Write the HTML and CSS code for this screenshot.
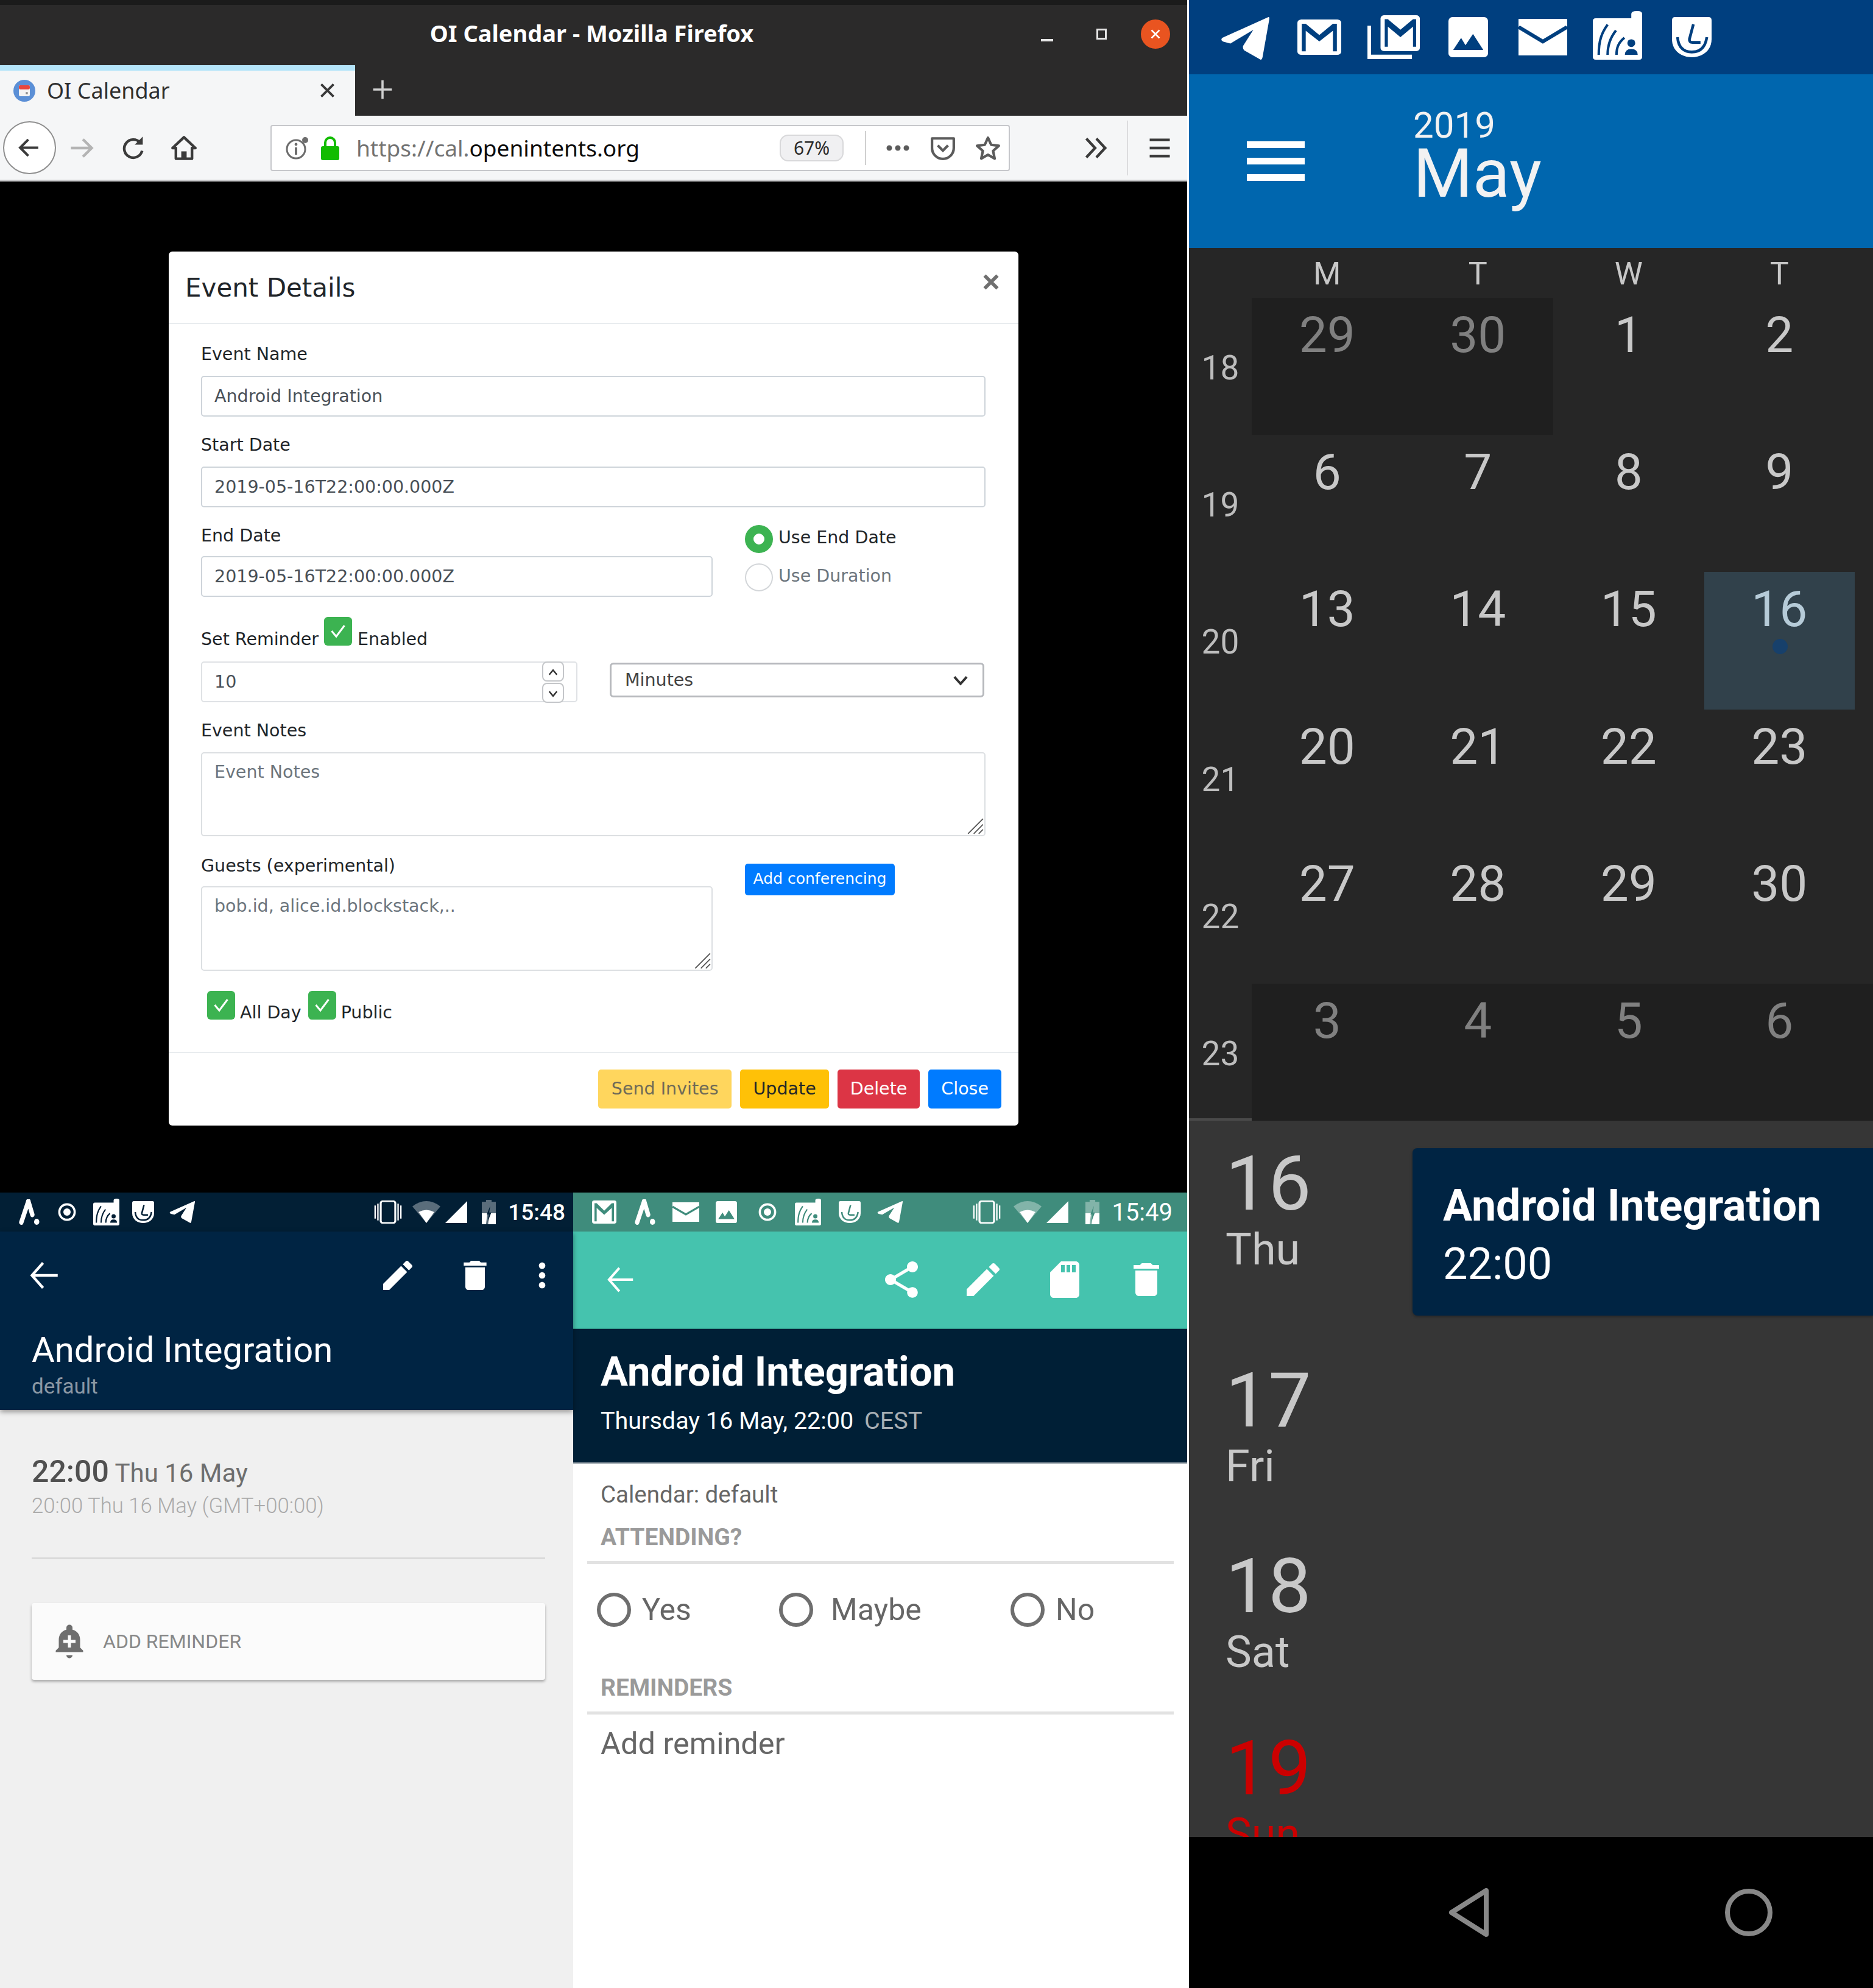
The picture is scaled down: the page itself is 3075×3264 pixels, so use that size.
FILE: index.html
```html
<!DOCTYPE html>
<html lang="en">
<head>
    <meta charset="UTF-8">
    <title>OI Calendar</title>
    <link rel="stylesheet" href="styles.css">
</head>
<body>
    <svg class="sprite" xmlns="http://www.w3.org/2000/svg">
        <symbol id="i-telegram" viewBox="0 0 100 100" preserveAspectRatio="none"><path d="M98 0 3 49Q-1 55 6 58L20 62 67 30 46 68Q45 74 48 78L82 100Q85 100 86 94L100 4Q100-1 98 0Z"/></symbol>
        <symbol id="i-gmail" viewBox="0 0 100 100" preserveAspectRatio="none"><rect width="100" height="100" rx="9"/><path d="M10 12V90H19V32L50 62 81 32V90H90V12H81L50 44 19 12Z" style="fill:var(--bg)"/></symbol>
        <symbol id="i-stack" viewBox="0 0 100 100" preserveAspectRatio="none"><path d="M0 24H7V90H85V100H0Z"/><rect x="25" width="75" height="82" rx="7"/><path d="M33 9V72H39V26L63 50 87 26V72H93V9H87L63 33 39 9Z" style="fill:var(--bg)"/></symbol>
        <symbol id="i-image" viewBox="0 0 100 100" preserveAspectRatio="none"><rect width="100" height="100" rx="10"/><path d="M12 82 32 52 43 70 62 42 88 82Z" style="fill:var(--bg)"/></symbol>
        <symbol id="i-mail" viewBox="0 0 100 100" preserveAspectRatio="none"><rect width="100" height="100"/><path d="M0 22 50 62 100 22" fill="none" stroke-width="9" style="stroke:var(--bg)"/></symbol>
        <symbol id="i-radio" viewBox="0 0 100 100" preserveAspectRatio="none"><path d="M6 15H78V6Q78 0 90 0 100 0 100 6V94Q100 100 94 100H6Q0 100 0 94V21Q0 15 6 15Z"/><g fill="none" stroke-width="5" style="stroke:var(--bg)"><path d="M12 90C12 60 18 45 30 28"/><path d="M30 90C30 70 35 55 47 40"/><path d="M48 90C48 75 52 65 64 55"/></g><g style="fill:var(--bg)"><circle cx="78" cy="66" r="8"/><path d="M65 90Q65 78 78 78 91 78 91 90Z"/></g></symbol>
        <symbol id="i-shield" viewBox="0 0 100 100" preserveAspectRatio="none"><path d="M0 8Q0 0 8 0H92Q100 0 100 8V55C100 85 75 100 50 100 25 100 0 85 0 55Z"/><g fill="none" stroke-width="7" style="stroke:var(--bg)"><path d="M54 18 44 55Q43 63 52 63H72"/><path d="M14 50C16 78 32 87 50 87 68 87 84 78 88 50"/></g></symbol>
        <symbol id="i-peak" viewBox="0 0 100 100" preserveAspectRatio="none"><path d="M46 8 14 90M46 8 64 60" fill="none" stroke="currentColor" stroke-width="20" stroke-linecap="round" stroke-linejoin="round"/><circle cx="84" cy="88" r="12"/></symbol>
        <symbol id="i-target" viewBox="0 0 100 100"><circle cx="50" cy="50" r="42" fill="none" stroke="currentColor" stroke-width="12"/><circle cx="50" cy="50" r="20"/></symbol>
        <symbol id="i-vibrate" viewBox="0 0 100 100" preserveAspectRatio="none"><rect x="24" y="3" width="52" height="94" rx="8" fill="none" stroke="currentColor" stroke-width="7"/><path d="M4 22V78M14 14V86M86 14V86M96 22V78" stroke="currentColor" stroke-width="5"/></symbol>
        <symbol id="i-wifi" viewBox="0 0 100 100" preserveAspectRatio="none"><path d="M0 24Q50-24 100 24L50 100Z" opacity=".35"/><path d="M22 50Q50 30 78 50L50 100Z"/></symbol>
        <symbol id="i-signal" viewBox="0 0 100 100" preserveAspectRatio="none"><path d="M100 0V100H0Z"/></symbol>
        <symbol id="i-battery" viewBox="0 0 100 100" preserveAspectRatio="none"><path d="M30 0H70V8H100V100H0V8H30Z" opacity=".35"/><path d="M0 55H40L30 100H0ZM55 55H100V100H45Z"/><path d="M60 25 35 60H50L42 90 68 52H53Z" style="fill:var(--bg)"/></symbol>
        <symbol id="i-back" viewBox="0 0 24 24"><path d="M21 12H3.500M11 3.500 3.500 12 11 20.500" fill="none" stroke="currentColor" stroke-width="1.800"/></symbol>
        <symbol id="i-pencil" viewBox="0 0 24 24"><path d="M3 17.25V21h3.75L17.81 9.94l-3.75-3.75L3 17.25zM20.71 7.04c.39-.39.39-1.02 0-1.41l-2.34-2.34c-.39-.39-1.02-.39-1.41 0l-1.83 1.83 3.75 3.75 1.83-1.83z"/></symbol>
        <symbol id="i-trash" viewBox="0 0 24 24"><path d="M6 19c0 1.1.9 2 2 2h8c1.1 0 2-.9 2-2V7H6v12zM19 4h-3.5l-1-1h-5l-1 1H5v2h14V4z"/></symbol>
        <symbol id="i-dots" viewBox="0 0 24 24"><path d="M12 8c1.1 0 2-.9 2-2s-.9-2-2-2-2 .9-2 2 .9 2 2 2zm0 2c-1.1 0-2 .9-2 2s.9 2 2 2 2-.9 2-2-.9-2-2-2zm0 6c-1.1 0-2 .9-2 2s.9 2 2 2 2-.9 2-2-.9-2-2-2z"/></symbol>
        <symbol id="i-share" viewBox="0 0 24 24"><path d="M18 16.08c-.76 0-1.44.3-1.96.77L8.91 12.7c.05-.23.09-.46.09-.7s-.04-.47-.09-.7l7.05-4.11c.54.5 1.25.81 2.04.81 1.66 0 3-1.34 3-3s-1.34-3-3-3-3 1.34-3 3c0 .24.04.47.09.7L8.04 9.81C7.5 9.31 6.79 9 6 9c-1.66 0-3 1.34-3 3s1.34 3 3 3c.79 0 1.5-.31 2.04-.81l7.12 4.16c-.05.21-.08.43-.08.65 0 1.61 1.31 2.92 2.92 2.92s2.92-1.31 2.92-2.92-1.31-2.92-2.92-2.92z"/></symbol>
        <symbol id="i-sd" viewBox="0 0 24 24"><path d="M18 2h-8L4.02 8 4 20c0 1.1.9 2 2 2h12c1.1 0 2-.9 2-2V4c0-1.1-.9-2-2-2zm-6 6h-2V4h2v4zm3 0h-2V4h2v4zm3 0h-2V4h2v4z"/></symbol>
        <symbol id="i-bell" viewBox="0 0 24 24"><path fill-rule="evenodd" d="M12 23c1.1 0 2-.9 2-2h-4c0 1.1.9 2 2 2zM19 16v-5c0-3.5-2-6-5-6.7V3a2 2 0 0 0-4 0v1.3C7 5 5 7.5 5 11v5l-2 2v1h18v-1l-2-2zM16 13h-3v3h-2v-3H8v-2h3V8h2v3h3v2z"/></symbol>
    </svg>

    <div class="screen">
        <div class="left-col">
            <div class="browser">
                <div class="titlebar">
                    <div class="window-title">OI Calendar - Mozilla Firefox</div>
                    <div class="window-btns">
                        <span class="win-min"></span>
                        <span class="win-max"></span>
                        <span class="win-close">
                            <svg viewBox="0 0 24 24"><path d="M6 6 18 18M18 6 6 18" stroke="#fff" stroke-width="2.4"/></svg>
                        </span>
                    </div>
                </div>
                <div class="tabbar">
                    <div class="tab">
                        <svg class="favicon" viewBox="0 0 32 32">
                            <circle cx="16" cy="16" r="16" fill="#5b8fd6"/>
                            <rect x="8" y="8" width="16" height="16" rx="2" fill="#f3f3f3"/>
                            <rect x="8" y="8" width="16" height="6" rx="2" fill="#e8463c"/>
                            <rect x="18" y="18" width="3" height="3" fill="#8a8a8a"/>
                        </svg>
                        <span class="tab-label">OI Calendar</span>
                        <svg class="tab-x" viewBox="0 0 24 24"><path d="M3 3 21 21M21 3 3 21" stroke="#3b3b3b" stroke-width="3.4"/></svg>
                    </div>
                    <svg class="tab-plus" viewBox="0 0 40 40"><path d="M20 3V37M3 20H37" stroke="#cfcfcf" stroke-width="4"/></svg>
                </div>
                <div class="toolbar">
                    <div class="nav-back">
                        <svg viewBox="0 0 40 40"><path d="M34 20H6M18 7 5 20 18 33" fill="none" stroke="#3b3b3b" stroke-width="4"/></svg>
                    </div>
                    <svg class="nav-icon nav-fwd" viewBox="0 0 40 40"><path d="M4 20H34M22 7 35 20 22 33" fill="none" stroke="#b4b4b4" stroke-width="4"/></svg>
                    <svg class="nav-icon nav-reload" viewBox="0 0 40 40"><path d="M30 12A13.500 13.500 0 1 0 33 24" fill="none" stroke="#3b3b3b" stroke-width="4"/><path d="M34 3V15H22Z" fill="#3b3b3b"/></svg>
                    <svg class="nav-icon nav-home" viewBox="0 0 40 40"><path d="M3 20 20 4 37 20H32V36H8V20Z" fill="none" stroke="#3b3b3b" stroke-width="4" stroke-linejoin="round"/><rect x="16" y="25" width="8" height="11" fill="#3b3b3b"/></svg>
                    <div class="urlbar">
                        <svg class="url-info" viewBox="0 0 40 40"><circle cx="18" cy="22" r="15" fill="none" stroke="#6d6d6d" stroke-width="3"/><circle cx="33" cy="7" r="5" fill="#6d6d6d"/><circle cx="18" cy="14" r="2.4" fill="#6d6d6d"/><rect x="16" y="19" width="4" height="12" fill="#6d6d6d"/></svg>
                        <svg class="url-lock" viewBox="0 0 32 40"><path d="M8 18V11a8 8 0 0 1 16 0v7" fill="none" stroke="#12bc00" stroke-width="4"/><rect x="1" y="17" width="30" height="23" rx="3" fill="#12bc00"/></svg>
                        <div class="url-text"><span class="url-dim">https://cal.</span>openintents.org</div>
                        <div class="url-zoom">67%</div>
                        <div class="url-sep"></div>
                        <svg class="url-more" viewBox="0 0 40 12"><circle cx="6" cy="6" r="4.500"/><circle cx="20" cy="6" r="4.500"/><circle cx="34" cy="6" r="4.500"/></svg>
                        <svg class="url-pocket" viewBox="0 0 40 40"><path d="M3 5H37V20A17 17 0 0 1 3 20Z" fill="none" stroke="#5b5b5b" stroke-width="4" stroke-linejoin="round"/><path d="M12 16 20 24 28 16" fill="none" stroke="#5b5b5b" stroke-width="4"/></svg>
                        <svg class="url-star" viewBox="0 0 40 40"><path d="M20 4 25 15 37 16.500 28 24.500 30.500 36.500 20 30.500 9.500 36.500 12 24.500 3 16.500 15 15Z" fill="none" stroke="#5b5b5b" stroke-width="4" stroke-linejoin="round"/></svg>
                    </div>
                    <svg class="nav-icon nav-overflow" viewBox="0 0 40 40"><path d="M5 6 18 20 5 34M20 6 33 20 20 34" fill="none" stroke="#3b3b3b" stroke-width="4"/></svg>
                    <div class="toolbar-sep"></div>
                    <svg class="nav-icon nav-menu" viewBox="0 0 40 40"><path d="M5 8H35M5 20H35M5 32H35" stroke="#3b3b3b" stroke-width="4"/></svg>
                </div>
                <div class="page-area">
                    <div class="modal">
                        <div class="modal-header">
                            <div class="modal-title">Event Details</div>
                            <svg class="modal-x" viewBox="0 0 24 24"><path d="M3 3 21 21M21 3 3 21" stroke="#6f6f6f" stroke-width="5"/></svg>
                        </div>
                        <div class="modal-body">
                            <div class="field">
                                <div class="label">Event Name</div>
                                <div class="input">Android Integration</div>
                            </div>
                            <div class="field">
                                <div class="label">Start Date</div>
                                <div class="input">2019-05-16T22:00:00.000Z</div>
                            </div>
                            <div class="split">
                                <div class="field col-main">
                                    <div class="label">End Date</div>
                                    <div class="input">2019-05-16T22:00:00.000Z</div>
                                </div>
                                <div class="col-side radio-col">
                                    <div class="radio-row">
                                        <span class="radio radio-on"></span><span class="radio-text">Use End Date</span>
                                    </div>
                                    <div class="radio-row radio-row-off">
                                        <span class="radio"></span><span class="radio-text">Use Duration</span>
                                    </div>
                                </div>
                            </div>
                            <div class="reminder-label">
                                <span class="reminder-text">Set Reminder</span>
                                <span class="check"><svg viewBox="0 0 24 24"><path d="M5 12 10 18 19 6" fill="none" stroke="#fff" stroke-width="2"/></svg></span>
                                <span class="reminder-text">Enabled</span>
                            </div>
                            <div class="reminder-row">
                                <div class="input input-number">
                                    <span>10</span>
                                    <div class="spinner">
                                        <span class="spin-btn"><svg viewBox="0 0 16 16"><path d="M3 11 8 5 13 11" fill="none" stroke="#333" stroke-width="2"/></svg></span>
                                        <span class="spin-btn"><svg viewBox="0 0 16 16"><path d="M3 5 8 11 13 5" fill="none" stroke="#333" stroke-width="2"/></svg></span>
                                    </div>
                                </div>
                                <div class="select">
                                    <span>Minutes</span>
                                    <svg viewBox="0 0 24 16"><path d="M3 3 12 13 21 3" fill="none" stroke="#333" stroke-width="3.4"/></svg>
                                </div>
                            </div>
                            <div class="field field-notes">
                                <div class="label">Event Notes</div>
                                <div class="textarea placeholder">Event Notes
                                    <svg class="grip" viewBox="0 0 24 24"><path d="M23 2 2 23M23 10 10 23M23 17 17 23" stroke="#555" stroke-width="1.600"/></svg>
                                </div>
                            </div>
                            <div class="split">
                                <div class="field col-main">
                                    <div class="label">Guests (experimental)</div>
                                    <div class="textarea placeholder">bob.id, alice.id.blockstack,..
                                        <svg class="grip" viewBox="0 0 24 24"><path d="M23 2 2 23M23 10 10 23M23 17 17 23" stroke="#555" stroke-width="1.600"/></svg>
                                    </div>
                                </div>
                                <div class="col-side">
                                    <div class="btn btn-blue btn-small">Add conferencing</div>
                                </div>
                            </div>
                            <div class="checks-row">
                                <span class="check"><svg viewBox="0 0 24 24"><path d="M5 12 10 18 19 6" fill="none" stroke="#fff" stroke-width="2"/></svg></span>
                                <span class="check-text">All Day</span>
                                <span class="check"><svg viewBox="0 0 24 24"><path d="M5 12 10 18 19 6" fill="none" stroke="#fff" stroke-width="2"/></svg></span>
                                <span class="check-text">Public</span>
                            </div>
                        </div>
                        <div class="modal-footer">
                            <div class="btn btn-yellow-off">Send Invites</div>
                            <div class="btn btn-yellow">Update</div>
                            <div class="btn btn-red">Delete</div>
                            <div class="btn btn-blue">Close</div>
                        </div>
                    </div>
                </div>
            </div>

            <div class="phones">
                <div class="phone phone-a">
                    <div class="status status-navy">
                        <svg class="st st-peak"><use href="#i-peak"/></svg>
                        <svg class="st st-target"><use href="#i-target"/></svg>
                        <svg class="st st-radio"><use href="#i-radio"/></svg>
                        <svg class="st st-shield"><use href="#i-shield"/></svg>
                        <svg class="st st-plane"><use href="#i-telegram"/></svg>
                        <div class="status-right">
                            <svg class="st st-vibrate"><use href="#i-vibrate"/></svg>
                            <svg class="st st-wifi"><use href="#i-wifi"/></svg>
                            <svg class="st st-signal"><use href="#i-signal"/></svg>
                            <svg class="st st-battery"><use href="#i-battery"/></svg>
                            <span class="clock">15:48</span>
                        </div>
                    </div>
                    <div class="appbar-a">
                        <div class="actions-a">
                            <svg class="act-back"><use href="#i-back"/></svg>
                            <svg class="act act-push"><use href="#i-pencil"/></svg>
                            <svg class="act act-trash-a"><use href="#i-trash"/></svg>
                            <svg class="act act-dots-a"><use href="#i-dots"/></svg>
                        </div>
                        <div class="a-title">Android Integration</div>
                        <div class="a-sub">default</div>
                    </div>
                    <div class="a-body">
                        <div class="a-time"><strong>22:00</strong> Thu 16 May</div>
                        <div class="a-time-sub">20:00 Thu 16 May (GMT+00:00)</div>
                        <div class="a-divider"></div>
                        <div class="a-card">
                            <svg class="a-bell"><use href="#i-bell"/></svg>
                            <span>ADD REMINDER</span>
                        </div>
                    </div>
                </div>

                <div class="phone phone-b">
                    <div class="status status-teal">
                        <svg class="st st-gmail"><use href="#i-gmail"/></svg>
                        <svg class="st st-peak"><use href="#i-peak"/></svg>
                        <svg class="st st-mail"><use href="#i-mail"/></svg>
                        <svg class="st st-image"><use href="#i-image"/></svg>
                        <svg class="st st-target"><use href="#i-target"/></svg>
                        <svg class="st st-radio"><use href="#i-radio"/></svg>
                        <svg class="st st-shield"><use href="#i-shield"/></svg>
                        <svg class="st st-plane"><use href="#i-telegram"/></svg>
                        <div class="status-right">
                            <svg class="st st-vibrate"><use href="#i-vibrate"/></svg>
                            <svg class="st st-wifi"><use href="#i-wifi"/></svg>
                            <svg class="st st-signal"><use href="#i-signal"/></svg>
                            <svg class="st st-battery"><use href="#i-battery"/></svg>
                            <span class="clock">15:49</span>
                        </div>
                    </div>
                    <div class="appbar-b">
                        <svg class="act-back act-back-b"><use href="#i-back"/></svg>
                        <svg class="act-b act-push"><use href="#i-share"/></svg>
                        <svg class="act-b"><use href="#i-pencil"/></svg>
                        <svg class="act-b"><use href="#i-sd"/></svg>
                        <svg class="act-b"><use href="#i-trash"/></svg>
                    </div>
                    <div class="b-header">
                        <div class="b-title">Android Integration</div>
                        <div class="b-when">Thursday 16 May, 22:00 <span class="b-zone">CEST</span></div>
                    </div>
                    <div class="b-body">
                        <div class="b-calendar">Calendar: default</div>
                        <div class="b-section">ATTENDING?</div>
                        <div class="b-rule"></div>
                        <div class="b-radios">
                            <span class="b-radio-wrap b-yes"><span class="b-radio"></span>Yes</span>
                            <span class="b-radio-wrap b-maybe"><span class="b-radio"></span>Maybe</span>
                            <span class="b-radio-wrap"><span class="b-radio"></span>No</span>
                        </div>
                        <div class="b-section b-section-2">REMINDERS</div>
                        <div class="b-rule"></div>
                        <div class="b-add">Add reminder</div>
                    </div>
                </div>
            </div>
        </div>

        <div class="right-col">
            <div class="status status-blue">
                <svg class="st-r r-plane"><use href="#i-telegram"/></svg>
                <svg class="st-r r-gmail"><use href="#i-gmail"/></svg>
                <svg class="st-r r-stack"><use href="#i-stack"/></svg>
                <svg class="st-r r-image"><use href="#i-image"/></svg>
                <svg class="st-r r-mail"><use href="#i-mail"/></svg>
                <svg class="st-r r-radio"><use href="#i-radio"/></svg>
                <svg class="st-r r-shield"><use href="#i-shield"/></svg>
            </div>
            <div class="cal-header">
                <div class="hamburger"><span></span><span></span><span></span></div>
                <div class="cal-heading">
                    <div class="cal-year">2019</div>
                    <div class="cal-month">May</div>
                </div>
            </div>
            <div class="cal-grid">
                <div></div>
                <div class="weekday">M</div>
                <div class="weekday">T</div>
                <div class="weekday">W</div>
                <div class="weekday">T</div>
                <div></div>

                <div class="week-no">18</div>
                <div class="day day-off">29</div>
                <div class="day day-off">30</div>
                <div class="day">1</div>
                <div class="day">2</div>
                <div></div>

                <div class="week-no">19</div>
                <div class="day">6</div>
                <div class="day">7</div>
                <div class="day">8</div>
                <div class="day">9</div>
                <div></div>

                <div class="week-no">20</div>
                <div class="day">13</div>
                <div class="day">14</div>
                <div class="day">15</div>
                <div class="day day-today">16<span class="day-dot"></span></div>
                <div></div>

                <div class="week-no">21</div>
                <div class="day">20</div>
                <div class="day">21</div>
                <div class="day">22</div>
                <div class="day">23</div>
                <div></div>

                <div class="week-no">22</div>
                <div class="day">27</div>
                <div class="day">28</div>
                <div class="day">29</div>
                <div class="day">30</div>
                <div></div>

                <div class="week-no">23</div>
                <div class="day day-off">3</div>
                <div class="day day-off">4</div>
                <div class="day day-off">5</div>
                <div class="day day-off">6</div>
                <div class="day-off"></div>
            </div>
            <div class="agenda">
                <div class="agenda-row row-16">
                    <div class="agenda-date">
                        <div class="agenda-num">16</div>
                        <div class="agenda-dow">Thu</div>
                    </div>
                    <div class="event-card">
                        <div class="event-title">Android Integration</div>
                        <div class="event-time">22:00</div>
                    </div>
                </div>
                <div class="agenda-row row-17">
                    <div class="agenda-date">
                        <div class="agenda-num">17</div>
                        <div class="agenda-dow">Fri</div>
                    </div>
                </div>
                <div class="agenda-row row-18">
                    <div class="agenda-date">
                        <div class="agenda-num">18</div>
                        <div class="agenda-dow">Sat</div>
                    </div>
                </div>
                <div class="agenda-row agenda-sunday">
                    <div class="agenda-date">
                        <div class="agenda-num">19</div>
                        <div class="agenda-dow">Sun</div>
                    </div>
                </div>
            </div>
            <div class="navbar">
                <svg class="nav-tri" viewBox="0 0 68 80"><path d="M62 4V76L5 40Z" fill="none" stroke="#888" stroke-width="8" stroke-linejoin="round"/></svg>
                <svg class="nav-circle" viewBox="0 0 80 80"><circle cx="40" cy="40" r="35" fill="none" stroke="#888" stroke-width="8"/></svg>
            </div>
        </div>
    </div>
</body>
</html>
```

FILE: styles.css
```css
* {
    box-sizing: border-box;
}
html, body {
    margin: 0;
    background: #000;
}
body {
    width: 3075px;
    height: 3264px;
    overflow: hidden;
    font-family: 'Roboto', 'Liberation Sans', sans-serif;
}
svg {
    display: block;
    fill: currentColor;
}
.sprite {
    width: 0;
    height: 0;
    position: absolute;
}
.screen {
    display: flex;
    width: 3075px;
    height: 3264px;
}
.left-col {
    width: 1952px;
    flex: none;
    background: #fff;
}
.right-col {
    width: 1123px;
    flex: none;
    display: flex;
    flex-direction: column;
}

/* Firefox window */
.browser {
    width: 1949px;
    height: 1958px;
    display: flex;
    flex-direction: column;
    font-family: 'Noto Sans', 'Open Sans', sans-serif;
}
.titlebar {
    height: 107px;
    background: #2b2a2a;
    border-top: 8px solid #1b1b1b;
    display: flex;
    align-items: center;
    justify-content: center;
    position: relative;
    color: #fff;
}
.window-title {
    font-size: 38px;
    font-weight: 700;
    margin-top: -8px;
    margin-right: 6px;
}
.window-btns span {
    position: absolute;
}
.win-min {
    left: 1709px;
    top: 56px;
    width: 20px;
    height: 4px;
    background: #e6e6e6;
}
.win-max {
    left: 1800px;
    top: 39px;
    width: 17px;
    height: 18px;
    border: 3px solid #e6e6e6;
}
.win-close {
    left: 1873px;
    top: 24px;
    width: 48px;
    height: 48px;
    border-radius: 50%;
    background: #e95420;
    padding: 11px;
}
.tabbar {
    height: 83px;
    background: #2b2a2a;
    display: flex;
    align-items: center;
}
.tab {
    width: 583px;
    height: 83px;
    background: #f5f6f7;
    border-top: 9px solid #b4e4f9;
    display: flex;
    align-items: center;
    padding-left: 22px;
    padding-bottom: 9px;
    margin-right: 27px;
}
.favicon {
    width: 36px;
    height: 36px;
}
.tab-label {
    font-size: 36px;
    color: #2f2f2f;
    margin-left: 19px;
}
.tab-x {
    width: 27px;
    height: 27px;
    margin-left: auto;
    margin-right: 32px;
}
.tab-plus {
    width: 36px;
    height: 36px;
    margin-top: -4px;
}
.toolbar {
    height: 108px;
    background: #f5f6f7;
    border-bottom: 3px solid #c9c9cb;
    display: flex;
    align-items: center;
    padding-left: 5px;
}
.nav-back {
    width: 87px;
    height: 87px;
    border-radius: 50%;
    background: #fff;
    border: 2px solid #8f8f8f;
    padding: 21px;
}
.nav-icon {
    width: 44px;
    height: 44px;
    flex: none;
}
.nav-fwd {
    margin-left: 20px;
}
.nav-reload {
    margin-left: 41px;
}
.nav-home {
    margin-left: 39px;
}
.urlbar {
    width: 1214px;
    height: 76px;
    margin-left: 120px;
    background: #fff;
    border: 2px solid #c6c7cb;
    border-radius: 4px;
    display: flex;
    align-items: center;
    flex: none;
}
.url-info {
    width: 40px;
    height: 40px;
    margin-left: 22px;
}
.url-lock {
    width: 32px;
    height: 40px;
    margin-left: 18px;
}
.url-text {
    font-size: 37px;
    color: #0c0c0d;
    margin-left: 27px;
    white-space: nowrap;
    width: 695px;
}
.url-dim {
    color: #737373;
}
.url-zoom {
    width: 105px;
    height: 44px;
    line-height: 40px;
    text-align: center;
    font-size: 30px;
    background: #f0f0f2;
    border: 2px solid #d8d8da;
    border-radius: 14px;
    color: #2b2b2b;
}
.url-sep {
    width: 2px;
    height: 56px;
    background: #d0d0d0;
    margin-left: 35px;
}
.url-more {
    width: 40px;
    height: 12px;
    margin-left: 32px;
    color: #5b5b5b;
}
.url-pocket {
    width: 42px;
    height: 42px;
    margin-left: 33px;
}
.url-star {
    width: 42px;
    height: 42px;
    margin-left: 32px;
}
.nav-overflow {
    margin-left: 120px;
}
.toolbar-sep {
    width: 2px;
    height: 90px;
    background: #dcdcde;
    margin-left: 28px;
}
.nav-menu {
    margin-left: 30px;
}

/* event modal */
.page-area {
    flex: 1;
    background: #000;
    padding: 115px 0 0 277px;
}
.modal {
    width: 1395px;
    height: 1435px;
    background: #fff;
    border-radius: 6px;
    font-family: 'DejaVu Sans', sans-serif;
    color: #212529;
    font-size: 28.5px;
    display: flex;
    flex-direction: column;
}
.modal-header {
    height: 119px;
    flex: none;
    border-bottom: 2px solid #e9ecef;
    padding: 0 31px 0 27px;
    display: flex;
    justify-content: space-between;
}
.modal-title {
    font-size: 42px;
    line-height: 119px;
}
.modal-x {
    width: 28px;
    height: 28px;
    margin-top: 36px;
}
.modal-body {
    flex: 1;
    padding: 33px 54px 0 53px;
}
.field {
    margin-bottom: 30px;
}
.label {
    height: 34px;
    line-height: 34px;
    margin-bottom: 18px;
}
.input {
    height: 67px;
    line-height: 63px;
    border: 2px solid #ced4da;
    border-radius: 5px;
    padding: 0 20px;
    color: #495057;
    background: #fff;
}
.split {
    display: flex;
}
.col-main {
    width: 840px;
    flex: none;
    margin-bottom: 0;
}
.col-main .label {
    margin-bottom: 16px;
}
.col-side {
    margin-left: 53px;
}
.radio-col {
    padding-top: 0;
    margin-top: -3px;
}
.radio-row {
    display: flex;
    align-items: center;
    height: 46px;
    gap: 9px;
    margin-top: 2px;
}
.radio-row-off {
    margin-top: 17px;
    color: #6c757d;
}
.radio-text {
    padding-bottom: 6px;
}
.radio {
    width: 46px;
    height: 46px;
    border-radius: 50%;
    border: 2px solid #d3d6d9;
    background: #fff;
    flex: none;
    display: block;
}
.radio-on {
    border: 14px solid #3cb351;
}
.reminder-label {
    display: flex;
    align-items: flex-end;
    height: 48px;
    margin-top: 32px;
    line-height: 36px;
}
.reminder-text {
    position: relative;
    top: 8px;
    margin-right: 9px;
}
.check {
    width: 46px;
    height: 47px;
    background: #3cb351;
    border-radius: 6px;
    flex: none;
    display: block;
    padding: 5px;
}
.reminder-label .check {
    margin-right: 9px;
}
.reminder-row {
    display: flex;
    margin-top: 26px;
    align-items: flex-start;
}
.input-number {
    width: 618px;
    position: relative;
    border-color: #dfe2e5;
}
.spinner {
    position: absolute;
    right: 20px;
    top: -2px;
    display: flex;
    flex-direction: column;
    gap: 2px;
}
.spin-btn {
    width: 36px;
    height: 33px;
    border: 2px solid #c4c6c9;
    border-radius: 8px;
    background: #fff;
    padding: 6px;
    display: block;
}
.select {
    width: 615px;
    height: 57px;
    margin-left: 53px;
    margin-top: 2px;
    border: 3px solid #b7b9bd;
    border-radius: 6px;
    display: flex;
    align-items: center;
    justify-content: space-between;
    padding: 0 22px 0 22px;
    color: #444;
}
.select svg {
    width: 28px;
    height: 18px;
}
.field-notes {
    margin-top: 30px;
    margin-bottom: 32px;
}
.field-notes .label {
    margin-bottom: 18px;
}
.textarea {
    height: 138px;
    border: 2px solid #dcdfe2;
    border-radius: 5px;
    padding: 14px 20px;
    position: relative;
    line-height: 34px;
}
.placeholder {
    color: #6c757d;
}
.grip {
    position: absolute;
    right: 1px;
    bottom: 1px;
    width: 28px;
    height: 28px;
}
.col-main .textarea {
    height: 139px;
}
.btn {
    height: 64px;
    line-height: 64px;
    padding: 0 21px;
    border-radius: 5px;
    color: #fff;
    white-space: nowrap;
}
.btn-small {
    width: 246px;
    height: 52px;
    line-height: 50px;
    padding: 0;
    text-align: center;
    font-size: 25px;
    margin-top: 13px;
}
.btn-blue {
    background: #007bff;
}
.btn-red {
    background: #dc3545;
}
.btn-yellow {
    background: #ffc107;
    color: #212529;
}
.btn-yellow-off {
    background: #ffd65d;
    color: #6e6a57;
    padding: 0 22px;
}
.checks-row {
    display: flex;
    align-items: flex-end;
    margin-top: 32px;
    padding-left: 10px;
    height: 48px;
    line-height: 34px;
}
.check-text {
    margin: 0 11px 0 8px;
    position: relative;
    top: 6px;
}
.modal-footer {
    height: 121px;
    flex: none;
    border-top: 2px solid #e9ecef;
    display: flex;
    justify-content: flex-end;
    gap: 14px;
    padding: 27px 28px 0 0;
}

/* android screenshots */
.phones {
    display: flex;
    height: 1306px;
}
.phone {
    display: flex;
    flex-direction: column;
}
.phone-a {
    width: 941px;
    background: #f0f0f0;
    flex: none;
}
.phone-b {
    width: 1011px;
    background: #fff;
    flex: none;
}
.status {
    height: 64px;
    flex: none;
    display: flex;
    align-items: center;
    color: #fff;
    position: relative;
}
.status-navy {
    --bg: #021f35;
    background: #021f35;
    padding-left: 30px;
    height: 64px;
}
.status-teal {
    --bg: #3f8c7c;
    background: #3f8c7c;
    padding-left: 31px;
    margin-right: 3px;
}
.status-right {
    margin-left: auto;
    display: flex;
    align-items: center;
}
.phone-a .status-right {
    margin-right: 13px;
}
.phone-b .status-right {
    margin-right: 24px;
}
.st {
    flex: none;
}
.st-gmail {
    width: 40px;
    height: 38px;
    margin-right: 29px;
}
.st-peak {
    width: 36px;
    height: 42px;
}
.st-mail {
    width: 44px;
    height: 32px;
    margin-left: 27px;
}
.st-image {
    width: 35px;
    height: 36px;
    margin-left: 27px;
}
.st-target {
    width: 30px;
    height: 30px;
    margin-left: 29px;
}
.phone-b .st-target {
    margin-left: 35px;
}
.st-radio {
    width: 43px;
    height: 44px;
    margin-left: 28px;
}
.phone-b .st-radio {
    margin-left: 30px;
}
.st-shield {
    width: 36px;
    height: 36px;
    margin-left: 21px;
}
.phone-b .st-shield {
    margin-left: 29px;
}
.st-plane {
    width: 42px;
    height: 36px;
    margin-left: 25px;
}
.phone-b .st-plane {
    margin-left: 27px;
}
.st-vibrate {
    width: 46px;
    height: 38px;
}
.st-wifi {
    width: 46px;
    height: 36px;
    margin-left: 17px;
}
.phone-b .st-wifi {
    margin-left: 21px;
}
.st-signal {
    width: 36px;
    height: 36px;
    margin-left: 8px;
}
.st-battery {
    width: 23px;
    height: 40px;
    margin-left: 24px;
}
.phone-b .st-battery {
    margin-left: 28px;
}
.clock {
    font-size: 37px;
    font-weight: 500;
    margin-left: 20px;
}
.phone-b .clock {
    font-weight: 400;
    font-size: 40px;
}
.appbar-a {
    height: 293px;
    background: #002443;
    color: #fff;
    flex: none;
    box-shadow: 0 3px 8px rgba(0,0,0,0.4);
    padding: 0 19px 0 52px;
    position: relative;
}
.actions-a {
    display: flex;
    align-items: center;
    height: 64px;
    margin-top: 40px;
}
.act-back {
    width: 58px;
    height: 58px;
    margin-left: -8px;
}
.act {
    width: 64px;
    height: 64px;
}
.act-push {
    margin-left: auto;
}
.act-trash-a {
    margin-left: 63px;
}
.act-dots-a {
    margin-left: 46px;
}
.a-title {
    font-size: 58px;
    line-height: 70px;
    margin-top: 55px;
}
.a-sub {
    font-size: 35px;
    line-height: 44px;
    margin-top: 4px;
    color: #8a97a3;
}
.a-body {
    padding: 0 46px 0 52px;
    flex: 1;
}
.a-time {
    font-size: 42px;
    color: #6e6e6e;
    margin-top: 72px;
    line-height: 58px;
}
.a-time strong {
    font-size: 50px;
    color: #505050;
    font-weight: 500;
}
.a-time-sub {
    font-size: 34.7px;
    color: #aaa;
    margin-top: 2px;
    font-weight: 300;
    line-height: 44px;
}
.a-divider {
    height: 3px;
    background: #dadada;
    margin-top: 63px;
}
.a-card {
    height: 126px;
    margin-top: 72px;
    background: #fbfbfb;
    border-radius: 4px;
    box-shadow: 0 3px 4px rgba(0,0,0,0.3);
    display: flex;
    align-items: center;
    padding-left: 32px;
    color: #888;
    font-size: 32px;
}
.a-bell {
    width: 60px;
    height: 60px;
    color: #6e6e6e;
    margin-right: 25px;
}
.appbar-b {
    height: 160px;
    flex: none;
    background: #45c3ae;
    border-bottom: 2px solid #35a090;
    color: #fff;
    display: flex;
    align-items: center;
    padding: 0 31px 0 51px;
    margin-right: 3px;
}
.act-back-b {
    width: 54px;
    height: 54px;
    margin-left: 0;
}
.act-b {
    width: 72px;
    height: 72px;
    flex: none;
}
.act-b + .act-b {
    margin-left: 62px;
}
.b-header {
    height: 221px;
    flex: none;
    background: #001f36;
    border-bottom: 2px solid #85919b;
    color: #fff;
    padding: 32px 0 0 45px;
    margin-right: 3px;
}
.b-title {
    font-size: 67px;
    font-weight: 700;
    line-height: 76px;
}
.b-when {
    font-size: 39.5px;
    margin-top: 18px;
    line-height: 50px;
}
.b-zone {
    color: #a8afb5;
    margin-left: 8px;
}
.b-body {
    padding: 0 25px 0 23px;
    color: #666;
}
.b-calendar {
    font-size: 38.5px;
    margin: 26px 22px 0;
    line-height: 50px;
}
.b-section {
    font-size: 39px;
    font-weight: 700;
    color: #9a9a9a;
    margin: 20px 22px 0;
    line-height: 50px;
}
.b-section-2 {
    margin-top: 0;
}
.b-rule {
    height: 5px;
    background: #e2e2e2;
    margin-top: 14px;
}
.b-radios {
    display: flex;
    height: 130px;
    padding: 0 0 0 16px;
    align-items: center;
    margin-top: 10px;
    font-size: 50px;
    margin-bottom: 38px;
}
.b-radio-wrap {
    display: flex;
    align-items: center;
}
.b-radio {
    width: 56px;
    height: 56px;
    border-radius: 50%;
    border: 6px solid #6e6e6e;
    margin-right: 18px;
    flex: none;
}
.b-yes {
    width: 299px;
}
.b-maybe {
    width: 380px;
}
.b-maybe .b-radio {
    margin-right: 29px;
}
.b-add {
    font-size: 50.5px;
    margin: 16px 22px 0;
    line-height: 64px;
}

/* calendar panel */
.status-blue {
    --bg: #003f7f;
    background: #003f7f;
    height: 122px;
    padding-left: 52px;
}
.st-r {
    flex: none;
}
.r-plane {
    width: 80px;
    height: 70px;
    margin-top: 4px;
}
.r-gmail {
    width: 72px;
    height: 58px;
    margin-left: 46px;
}
.r-stack {
    width: 86px;
    height: 72px;
    margin-left: 43px;
    margin-bottom: 1px;
}
.r-image {
    width: 65px;
    height: 66px;
    margin-left: 47px;
}
.r-mail {
    width: 80px;
    height: 60px;
    margin-left: 50px;
}
.r-radio {
    width: 81px;
    height: 80px;
    margin-left: 42px;
    margin-bottom: 6px;
}
.r-shield {
    width: 65px;
    height: 66px;
    margin-left: 49px;
}
.cal-header {
    height: 285px;
    flex: none;
    background: #0066ae;
    display: flex;
    align-items: center;
    padding-left: 95px;
    color: #f2f2f2;
}
.hamburger {
    width: 95px;
    display: flex;
    flex-direction: column;
    gap: 16px;
}
.hamburger span {
    height: 11px;
    background: #fff;
}
.cal-heading {
    margin-left: 178px;
    margin-top: -25px;
}
.cal-year {
    font-size: 60px;
    line-height: 56px;
}
.cal-month {
    font-size: 112px;
    line-height: 82px;
    margin-top: 10px;
}
.cal-grid {
    height: 1433px;
    flex: none;
    background: #262626;
    border-bottom: 4px solid #4a4a4a;
    display: grid;
    grid-template-columns: 103px repeat(4, 247.5px) 1fr;
    grid-template-rows: 82px repeat(6, 225.200px);
    color: #c8c8c8;
}
.weekday {
    text-align: center;
    font-size: 52px;
    line-height: 86px;
}
.week-no {
    font-size: 55px;
    padding-top: 83px;
    text-align: center;
    line-height: 64px;
    color: #bdbdbd;
}
.day {
    font-size: 82px;
    line-height: 90px;
    padding-top: 16px;
    text-align: center;
    position: relative;
}
.day-off {
    background: #1f1f1f;
    color: #808080;
}
.day-today {
    background: #31414b;
    color: #b6cbd8;
}
.day-dot {
    position: absolute;
    left: 112px;
    top: 110px;
    width: 25px;
    height: 25px;
    border-radius: 50%;
    background: #17406b;
}
.agenda {
    flex: 1;
    background: #363636;
    overflow: hidden;
    padding-top: 41px;
}
.agenda-row {
    display: flex;
    align-items: flex-start;
    padding-left: 60px;
    color: #c8c8c8;
}
.row-16 {
    height: 356px;
}
.row-17 {
    height: 305px;
}
.row-18 {
    height: 299px;
}
.agenda-sunday {
    color: #cc0000;
}
.agenda-date {
    width: 307px;
    flex: none;
}
.agenda-num {
    font-size: 125px;
    line-height: 125px;
}
.agenda-dow {
    font-size: 72px;
    line-height: 72px;
    margin-top: 10px;
}
.event-card {
    flex: 1;
    height: 275px;
    margin-top: 4px;
    background: #002443;
    border-radius: 8px 0 0 8px;
    box-shadow: 0 2px 4px rgba(0,0,0,0.3);
    padding: 53px 0 0 50px;
    color: #fff;
}
.event-title {
    font-size: 71.5px;
    font-weight: 700;
    line-height: 84px;
}
.event-time {
    font-size: 72px;
    line-height: 84px;
    margin-top: 12px;
}
.navbar {
    height: 248px;
    flex: none;
    background: #000;
    display: flex;
    align-items: center;
    padding-left: 426px;
}
.nav-tri {
    width: 68px;
    height: 80px;
}
.nav-circle {
    width: 80px;
    height: 80px;
    margin-left: 385px;
}
```
